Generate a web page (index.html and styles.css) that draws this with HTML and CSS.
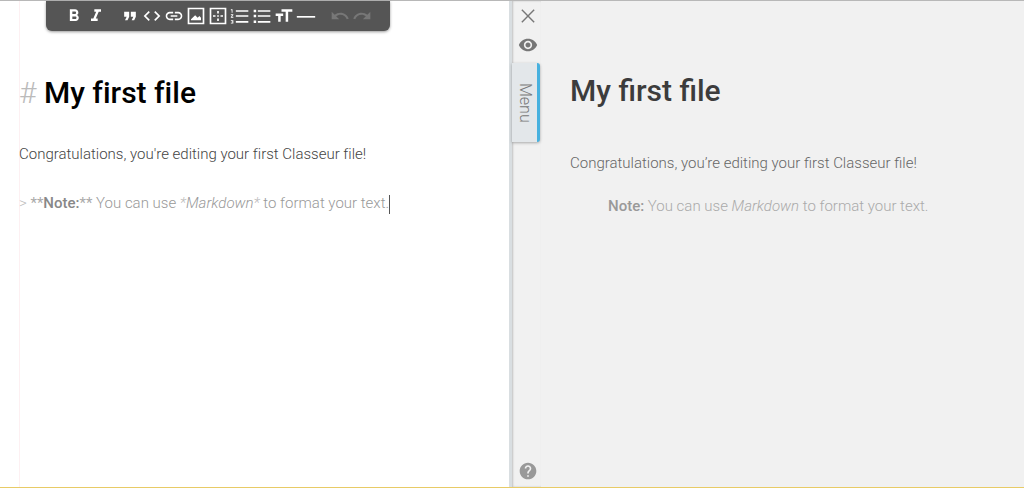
FILE: index.html
```html
<!DOCTYPE html>
<html lang="en">
<head>
    <meta charset="UTF-8">
    <meta name="viewport" content="width=device-width, initial-scale=1.0">
    <title>My first file - Classeur</title>
    <link rel="stylesheet" href="styles.css">
</head>
<body>
    <div class="app">
        <main class="editor">
            <div class="page">
                <div class="toolbar" role="toolbar" aria-label="Formatting">
                    <button type="button" aria-label="Bold"><svg viewBox="0 0 24 24"><path d="M15.6 10.79c.97-.67 1.65-1.77 1.65-2.79 0-2.26-1.75-4-4-4H7v14h7.04c2.09 0 3.71-1.7 3.71-3.79 0-1.52-.86-2.82-2.15-3.42zM10 6.5h3c.83 0 1.5.67 1.5 1.5s-.67 1.5-1.5 1.5h-3v-3zm3.5 9H10v-3h3.500c.83 0 1.5.67 1.5 1.5s-.67 1.5-1.5 1.5z"/></svg></button>
                    <button type="button" aria-label="Italic"><svg viewBox="0 0 24 24"><path d="M10 4v3h2.210l-3.420 8H6v3h8v-3h-2.210l3.420-8H18V4z"/></svg></button>
                    <span class="space"></span>
                    <button type="button" aria-label="Quote"><svg viewBox="0 0 24 24"><path d="M6 17h3l2-4V7H5v6h3zm8 0h3l2-4V7h-6v6h3z"/></svg></button>
                    <button type="button" aria-label="Code"><svg viewBox="0 0 24 24"><path d="M9.400 16.600L4.800 12l4.600-4.600L8 6l-6 6 6 6 1.400-1.400zm5.200 0l4.600-4.600-4.600-4.600L16 6l6 6-6 6-1.400-1.400z"/></svg></button>
                    <button type="button" aria-label="Link"><svg viewBox="0 0 24 24"><path d="M3.900 12c0-1.710 1.390-3.100 3.100-3.100h4V7H7c-2.760 0-5 2.240-5 5s2.240 5 5 5h4v-1.900H7c-1.710 0-3.100-1.390-3.100-3.100zM8 13h8v-2H8v2zm9-6h-4v1.900h4c1.710 0 3.100 1.390 3.100 3.100s-1.390 3.100-3.100 3.100h-4V17h4c2.760 0 5-2.240 5-5s-2.240-5-5-5z"/></svg></button>
                    <button type="button" aria-label="Image"><svg viewBox="0 0 24 24"><path d="M2 2v20h20V2H2zm2 2h16v16H4V4zm2 13h12v-3l-2-2-2 2-3-3-5 5z"/></svg></button>
                    <button type="button" aria-label="Table"><svg viewBox="0 0 24 24"><path d="M2 2v20h20V2H2zm2 2h16v16H4V4zm7 2h2v3h-2zm0 9h2v3h-2zm-5-4h3v2H6zm9 0h3v2h-3zm-4 0h2v2h-2z"/></svg></button>
                    <button type="button" aria-label="Numbered list"><svg viewBox="0 0 24 24"><path d="M1 18h2v.5H2v1h1v.5H1v1h3v-4H1v1zm1-10h1V4H1v1h1v3zm-1 3h1.800L1 13.100v.9h3v-1H2.200L4 10.900V10H1v1zm6-6v2h15V5H7zm0 15h15v-2H7v2zm0-7h15v-2H7v2z"/></svg></button>
                    <button type="button" aria-label="Bullet list"><svg viewBox="0 0 24 24"><path d="M2 4.500h3v3H2zm0 6h3v3H2zm0 7h3v3H2zM7 5h15v2H7zm0 6h15v2H7zm0 7h15v2H7z"/></svg></button>
                    <button type="button" aria-label="Title"><svg viewBox="0 0 24 24"><path d="M9 4v3h5v12h3V7h5V4H9zm-7 8h3v7h3v-7h3V9H2v3z"/></svg></button>
                    <button type="button" aria-label="Horizontal rule"><svg viewBox="0 0 24 24"><path d="M1 12h22v2H1z"/></svg></button>
                    <span class="space"></span>
                    <button type="button" aria-label="Undo" disabled><svg viewBox="0 0 24 24"><path d="M12.500 8c-2.650 0-5.050.99-6.900 2.600L2 7v9h9l-3.620-3.620c1.390-1.160 3.160-1.880 5.120-1.880 3.540 0 6.550 2.310 7.600 5.500l2.370-.78C21.080 11.030 17.150 8 12.500 8z"/></svg></button>
                    <button type="button" aria-label="Redo" disabled><svg viewBox="0 0 24 24"><path d="M18.400 10.600C16.550 8.990 14.150 8 11.500 8c-4.650 0-8.580 3.030-9.960 7.220L3.900 16c1.050-3.190 4.050-5.500 7.600-5.500 1.950 0 3.730.72 5.120 1.880L13 16h9V7l-3.600 3.600z"/></svg></button>
                </div>
                <div class="source">
                    <h1><span class="mark">#</span> My first file</h1>
                    <p>Congratulations, you're editing your first Classeur file!</p>
                    <p class="quote"><span class="mark">&gt;</span> <b>**<strong>Note:</strong>**</b> You can use <em><span class="mark">*</span>Markdown<span class="mark">*</span></em> to format your text.<span class="cursor"></span></p>
                </div>
            </div>
        </main>
        <aside class="side">
            <div class="side-buttons">
                <button type="button" aria-label="Close"><svg viewBox="0 0 24 24"><path d="M20 5.200L18.800 4 12 10.800 5.200 4 4 5.200l6.800 6.800L4 18.800 5.200 20l6.800-6.800 6.800 6.800 1.200-1.200-6.800-6.800z"/></svg></button>
                <button type="button" aria-label="Toggle preview"><svg viewBox="0 0 24 24"><path d="M12 4.500C7 4.500 2.730 7.610 1 12c1.730 4.390 6 7.500 11 7.500s9.270-3.110 11-7.500c-1.730-4.390-6-7.500-11-7.500zM12 17c-2.760 0-5-2.240-5-5s2.240-5 5-5 5 2.240 5 5-2.240 5-5 5zm0-8c-1.660 0-3 1.340-3 3s1.340 3 3 3 3-1.340 3-3-1.340-3-3-3z"/></svg></button>
            </div>
            <button type="button" class="menu">Menu</button>
            <button type="button" class="help" aria-label="Help"><svg viewBox="0 0 24 24"><path d="M12 2C6.480 2 2 6.480 2 12s4.480 10 10 10 10-4.480 10-10S17.520 2 12 2zm1 17h-2v-2h2v2zm2.070-7.750l-.9.920C13.450 12.900 13 13.500 13 15h-2v-.5c0-1.100.45-2.100 1.170-2.830l1.240-1.260c.37-.36.59-.86.59-1.410 0-1.100-.9-2-2-2s-2 .9-2 2H8c0-2.210 1.790-4 4-4s4 1.790 4 4c0 .88-.36 1.680-.93 2.250z"/></svg></button>
        </aside>
        <section class="preview">
            <h1>My first file</h1>
            <p>Congratulations, you’re editing your first Classeur file!</p>
            <blockquote><strong>Note:</strong> You can use <em>Markdown</em> to format your text.</blockquote>
        </section>
    </div>
</body>
</html>
```

FILE: styles.css
```css
* {
    box-sizing: border-box;
}

body {
    margin: 0;
    font-family: Roboto, "Liberation Sans", sans-serif;
    font-size: 15px;
    font-weight: 300;
    line-height: 24px;
    background-color: #f1f1f1;
}

button {
    border: none;
    padding: 0;
    background: none;
    color: inherit;
    font: inherit;
    cursor: pointer;
}

svg {
    display: block;
    width: 100%;
    fill: currentColor;
}

h1 {
    margin: 0;
    font-size: 30px;
    font-weight: 500;
    line-height: 40px;
}

p {
    margin: 0;
}

strong {
    font-weight: 500;
}

.app {
    display: flex;
    min-height: 100vh;
    border-top: 1px solid #b8b8b8;
    border-bottom: 1px solid #e8cb66;
}

/* Editor */
.editor {
    display: flex;
    width: calc(50% - 3px);
    padding-left: 19px;
    background-color: #fff;
    color: #444;
}

.page {
    flex: 1;
    box-shadow: inset 1px 0 0 #fdf0f2;
}

.toolbar {
    display: flex;
    gap: 2px;
    width: max-content;
    height: 30px;
    margin-left: 27px;
    padding: 5px 18px;
    border-radius: 0 0 6px 6px;
    background-color: #555;
    box-shadow: 0 1px 3px rgba(0, 0, 0, 0.4);
    color: #fff;
}

.toolbar button {
    width: 20px;
    height: 20px;
}

.toolbar button:disabled {
    color: #777;
}

.space {
    width: 10px;
}

.source {
    padding-top: 42px;
    font-variant-ligatures: none;
}

.source h1 {
    margin-bottom: 29px;
    color: #000;
}

.source p {
    margin-bottom: 25px;
}

.source .mark {
    color: #bbb;
    font-weight: 300;
}

.source .quote {
    color: #999;
}

.quote b {
    color: #aaa;
    font-weight: 400;
}

.quote strong {
    color: #888;
}

.cursor {
    display: inline-block;
    height: 19px;
    border-left: 1px solid #555;
    vertical-align: middle;
}

/* Side bar */
.side {
    display: flex;
    flex-direction: column;
    align-items: flex-start;
    width: 32px;
    border-left: 3px solid #d9dee1;
    box-shadow: inset 1px 0 2px rgba(0, 0, 0, 0.2);
    color: #777;
}

.side-buttons {
    display: flex;
    flex-direction: column;
    gap: 9px;
    padding: 5px 6px 8px;
}

.side-buttons button,
.help {
    width: 20px;
    height: 20px;
}

.menu {
    width: 28px;
    height: 79px;
    border-right: 3px solid #47b1df;
    border-radius: 0 3px 3px 0;
    background-color: #e3e7ea;
    box-shadow: 0 1px 3px rgba(0, 0, 0, 0.3);
    font-size: 16px;
    writing-mode: vertical-rl;
}

.help {
    margin: auto 6px 6px;
    color: #999;
}

/* Preview */
.preview {
    flex: 1;
    padding: 70px 29px 0;
    color: #666;
}

.preview h1 {
    margin-bottom: 40px;
    color: #3c3c3c;
}

.preview blockquote {
    margin: 19px 38px;
    color: #aaa;
}

.preview strong {
    color: #999;
}
```
